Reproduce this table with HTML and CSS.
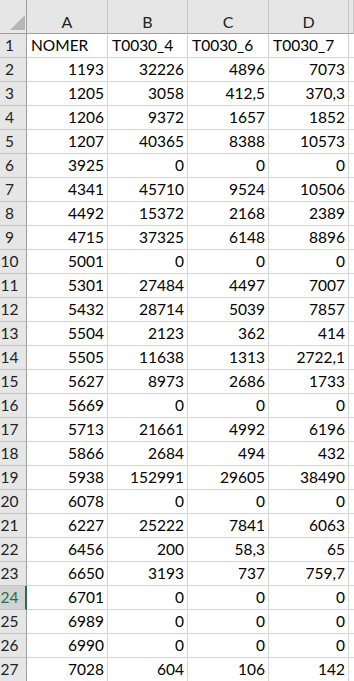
FILE: index.html
```html
<!DOCTYPE html>
<html>
<head>
<meta charset="utf-8">
<link rel="stylesheet" href="styles.css">
</head>
<body>
<div class="sheet">
  <div class="row head">
    <div class="corner"><span class="tri"></span></div>
    <div class="ch">A</div><div class="ch">B</div><div class="ch">C</div><div class="ch">D</div><div class="ch"></div>
  </div>
  <div class="row"><div class="rh">1</div><div class="c t">NOMER</div><div class="c t">T0030_4</div><div class="c t">T0030_6</div><div class="c t">T0030_7</div><div class="c"></div></div>
  <div class="row"><div class="rh">2</div><div class="c">1193</div><div class="c">32226</div><div class="c">4896</div><div class="c">7073</div><div class="c"></div></div>
  <div class="row"><div class="rh">3</div><div class="c">1205</div><div class="c">3058</div><div class="c">412,5</div><div class="c">370,3</div><div class="c"></div></div>
  <div class="row"><div class="rh">4</div><div class="c">1206</div><div class="c">9372</div><div class="c">1657</div><div class="c">1852</div><div class="c"></div></div>
  <div class="row"><div class="rh">5</div><div class="c">1207</div><div class="c">40365</div><div class="c">8388</div><div class="c">10573</div><div class="c"></div></div>
  <div class="row"><div class="rh">6</div><div class="c">3925</div><div class="c">0</div><div class="c">0</div><div class="c">0</div><div class="c"></div></div>
  <div class="row"><div class="rh">7</div><div class="c">4341</div><div class="c">45710</div><div class="c">9524</div><div class="c">10506</div><div class="c"></div></div>
  <div class="row"><div class="rh">8</div><div class="c">4492</div><div class="c">15372</div><div class="c">2168</div><div class="c">2389</div><div class="c"></div></div>
  <div class="row"><div class="rh">9</div><div class="c">4715</div><div class="c">37325</div><div class="c">6148</div><div class="c">8896</div><div class="c"></div></div>
  <div class="row"><div class="rh">10</div><div class="c">5001</div><div class="c">0</div><div class="c">0</div><div class="c">0</div><div class="c"></div></div>
  <div class="row"><div class="rh">11</div><div class="c">5301</div><div class="c">27484</div><div class="c">4497</div><div class="c">7007</div><div class="c"></div></div>
  <div class="row"><div class="rh">12</div><div class="c">5432</div><div class="c">28714</div><div class="c">5039</div><div class="c">7857</div><div class="c"></div></div>
  <div class="row"><div class="rh">13</div><div class="c">5504</div><div class="c">2123</div><div class="c">362</div><div class="c">414</div><div class="c"></div></div>
  <div class="row"><div class="rh">14</div><div class="c">5505</div><div class="c">11638</div><div class="c">1313</div><div class="c">2722,1</div><div class="c"></div></div>
  <div class="row"><div class="rh">15</div><div class="c">5627</div><div class="c">8973</div><div class="c">2686</div><div class="c">1733</div><div class="c"></div></div>
  <div class="row"><div class="rh">16</div><div class="c">5669</div><div class="c">0</div><div class="c">0</div><div class="c">0</div><div class="c"></div></div>
  <div class="row"><div class="rh">17</div><div class="c">5713</div><div class="c">21661</div><div class="c">4992</div><div class="c">6196</div><div class="c"></div></div>
  <div class="row"><div class="rh">18</div><div class="c">5866</div><div class="c">2684</div><div class="c">494</div><div class="c">432</div><div class="c"></div></div>
  <div class="row"><div class="rh">19</div><div class="c">5938</div><div class="c">152991</div><div class="c">29605</div><div class="c">38490</div><div class="c"></div></div>
  <div class="row"><div class="rh">20</div><div class="c">6078</div><div class="c">0</div><div class="c">0</div><div class="c">0</div><div class="c"></div></div>
  <div class="row"><div class="rh">21</div><div class="c">6227</div><div class="c">25222</div><div class="c">7841</div><div class="c">6063</div><div class="c"></div></div>
  <div class="row"><div class="rh">22</div><div class="c">6456</div><div class="c">200</div><div class="c">58,3</div><div class="c">65</div><div class="c"></div></div>
  <div class="row"><div class="rh">23</div><div class="c">6650</div><div class="c">3193</div><div class="c">737</div><div class="c">759,7</div><div class="c"></div></div>
  <div class="row"><div class="rh sel">24</div><div class="c">6701</div><div class="c">0</div><div class="c">0</div><div class="c">0</div><div class="c"></div></div>
  <div class="row"><div class="rh">25</div><div class="c">6989</div><div class="c">0</div><div class="c">0</div><div class="c">0</div><div class="c"></div></div>
  <div class="row"><div class="rh">26</div><div class="c">6990</div><div class="c">0</div><div class="c">0</div><div class="c">0</div><div class="c"></div></div>
  <div class="row"><div class="rh">27</div><div class="c">7028</div><div class="c">604</div><div class="c">106</div><div class="c">142</div><div class="c"></div></div>
</div>
</body>
</html>
```
FILE: styles.css
```css
html, body {
  margin: 0;
  padding: 0;
  background: #ffffff;
  overflow: hidden;
}
.sheet {
  width: 354px;
  overflow: hidden;
  font-family: Lato, "Open Sans", sans-serif;
  font-size: 15.5px;
  color: #000000;
}
.row {
  display: grid;
  grid-template-columns: 27px 81px 80px 81px 80px 5px;
  height: 24px;
}
.row.head {
  height: 34px;
}
.corner {
  box-sizing: border-box;
  background: #e6e6e6;
  border-right: 1px solid #9f9f9f;
  border-bottom: 1px solid #9f9f9f;
  display: flex;
  justify-content: flex-end;
  align-items: flex-end;
  padding: 0 1px 3px 0;
}
.tri {
  width: 0;
  height: 0;
  border-left: 15px solid transparent;
  border-bottom: 15px solid #b6b6b6;
}
.ch {
  box-sizing: border-box;
  background: #e6e6e6;
  border-right: 1px solid #c9c9c9;
  border-bottom: 1px solid #9f9f9f;
  text-align: center;
  font-size: 16px;
  line-height: 23px;
  padding-top: 10px;
  color: #222222;
}
.rh {
  box-sizing: border-box;
  background: #e6e6e6;
  border-right: 1px solid #9f9f9f;
  border-bottom: 1px solid #c3c3c3;
  text-align: center;
  padding-right: 7px;
  line-height: 23px;
  font-size: 15.5px;
  color: #222222;
}
.rh.sel {
  background: #d2d2d2;
  color: #217346;
  border-right: 2px solid #217346;
  padding-right: 6px;
}
.c {
  box-sizing: border-box;
  border-right: 1px solid #d4d4d4;
  border-bottom: 1px solid #d4d4d4;
  line-height: 23px;
  text-align: right;
  padding: 0 3px 0 4px;
  white-space: nowrap;
  overflow: hidden;
}
.c.t {
  text-align: left;
}
```
